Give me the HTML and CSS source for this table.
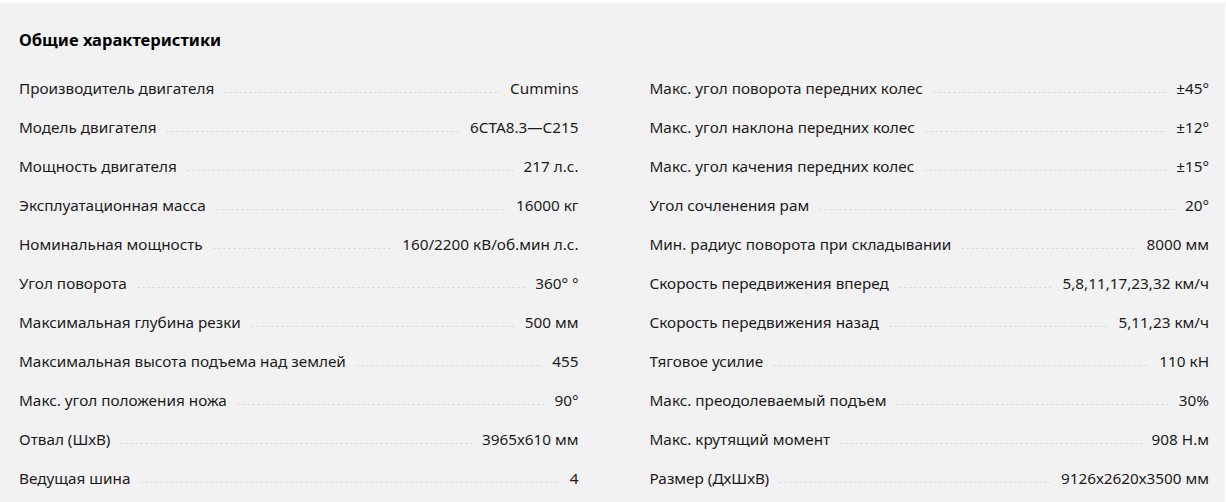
FILE: index.html
```html
<!DOCTYPE html>
<html lang="ru">
<head>
<meta charset="utf-8">
<title>Общие характеристики</title>
<link rel="stylesheet" href="styles.css">
</head>
<body>
<section class="panel">
  <h2 class="title">Общие характеристики</h2>
  <div class="grid">
    <div class="col">
      <div class="row"><span class="label">Производитель двигателя</span><span class="dots"></span><span class="value">Cummins</span></div>
      <div class="row"><span class="label">Модель двигателя</span><span class="dots"></span><span class="value">6CTA8.3—C215</span></div>
      <div class="row"><span class="label">Мощность двигателя</span><span class="dots"></span><span class="value">217 л.с.</span></div>
      <div class="row"><span class="label">Эксплуатационная масса</span><span class="dots"></span><span class="value">16000 кг</span></div>
      <div class="row"><span class="label">Номинальная мощность</span><span class="dots"></span><span class="value">160/2200 кВ/об.мин л.с.</span></div>
      <div class="row"><span class="label">Угол поворота</span><span class="dots"></span><span class="value">360° °</span></div>
      <div class="row"><span class="label">Максимальная глубина резки</span><span class="dots"></span><span class="value">500 мм</span></div>
      <div class="row"><span class="label">Максимальная высота подъема над землей</span><span class="dots"></span><span class="value">455</span></div>
      <div class="row"><span class="label">Макс. угол положения ножа</span><span class="dots"></span><span class="value">90°</span></div>
      <div class="row"><span class="label">Отвал (ШхВ)</span><span class="dots"></span><span class="value">3965х610 мм</span></div>
      <div class="row"><span class="label">Ведущая шина</span><span class="dots"></span><span class="value">4</span></div>
    </div>
    <div class="col">
      <div class="row"><span class="label">Макс. угол поворота передних колес</span><span class="dots"></span><span class="value">±45°</span></div>
      <div class="row"><span class="label">Макс. угол наклона передних колес</span><span class="dots"></span><span class="value">±12°</span></div>
      <div class="row"><span class="label">Макс. угол качения передних колес</span><span class="dots"></span><span class="value">±15°</span></div>
      <div class="row"><span class="label">Угол сочленения рам</span><span class="dots"></span><span class="value">20°</span></div>
      <div class="row"><span class="label">Мин. радиус поворота при складывании</span><span class="dots"></span><span class="value">8000 мм</span></div>
      <div class="row"><span class="label">Скорость передвижения вперед</span><span class="dots"></span><span class="value">5,8,11,17,23,32 км/ч</span></div>
      <div class="row"><span class="label">Скорость передвижения назад</span><span class="dots"></span><span class="value">5,11,23 км/ч</span></div>
      <div class="row"><span class="label">Тяговое усилие</span><span class="dots"></span><span class="value">110 кН</span></div>
      <div class="row"><span class="label">Макс. преодолеваемый подъем</span><span class="dots"></span><span class="value">30%</span></div>
      <div class="row"><span class="label">Макс. крутящий момент</span><span class="dots"></span><span class="value">908 Н.м</span></div>
      <div class="row"><span class="label">Размер (ДхШхВ)</span><span class="dots"></span><span class="value">9126х2620х3500 мм</span></div>
    </div>
  </div>
</section>
</body>
</html>
```
FILE: styles.css
```css
html, body {
  margin: 0;
  padding: 0;
  background: #ffffff;
}

body {
  font-family: "Noto Sans", "DejaVu Sans", sans-serif;
  color: #1b1b1b;
}

.panel {
  margin: 3px 1px 0 0;
  background: #f2f2f2;
  padding: 27px 16px 0 19px;
  height: 499px;
  box-sizing: border-box;
}

.title {
  margin: 0;
  font-size: 16.5px;
  font-weight: 700;
  line-height: 20px;
  color: #000;
}

.grid {
  display: grid;
  grid-template-columns: 1fr 1fr;
  column-gap: 71px;
  margin-top: 18px;
}

.row {
  display: flex;
  align-items: center;
  height: 39px;
  font-size: 15.3px;
  line-height: 20px;
}

.label,
.value {
  white-space: nowrap;
}

.dots {
  flex: 1;
  height: 1px;
  margin: 10px 10px 0;
  background-image: linear-gradient(to right, #dcdcdc 3px, transparent 3px);
  background-size: 5px 1px;
  background-repeat: repeat-x;
}
```
